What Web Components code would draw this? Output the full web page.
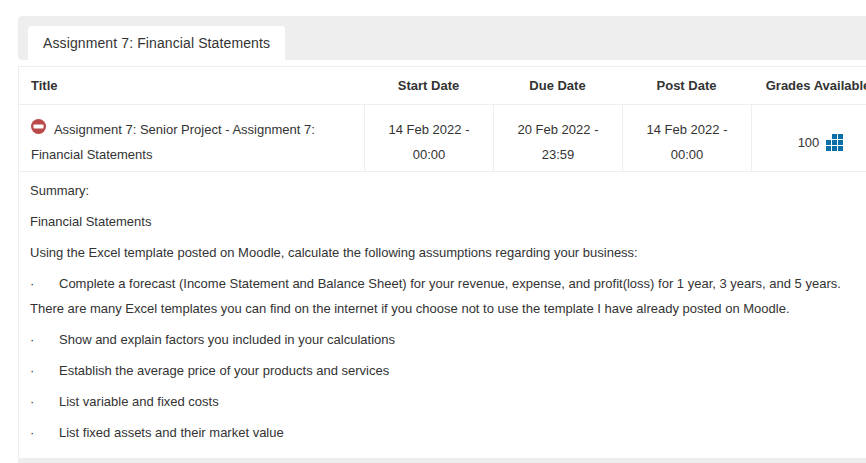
<!DOCTYPE html>
<html>
<head>
<meta charset="utf-8">
<title>Assignment 7</title>
<style>
  html, body { margin: 0; height: 463px; overflow: hidden; background: #fff; }
  body { font: 13px/25px "Liberation Sans", Arial, sans-serif; color: #333; }
  p { margin: 0 0 6px; }
</style>
</head>
<body>
<assignment-page>
  <tab-bar label="Assignment 7: Financial Statements"></tab-bar>
  <assignment-table>
    <assignment-row slot="row"
      name="Assignment 7: Senior Project - Assignment 7: Financial Statements"
      start="14 Feb 2022 - 00:00" due="20 Feb 2022 - 23:59" post="14 Feb 2022 - 00:00" grades="100"></assignment-row>
    <p>Summary:</p>
    <p>Financial Statements</p>
    <p>Using the Excel template posted on Moodle, calculate the following assumptions regarding your business:</p>
    <bullet-line style="margin-bottom: 0">Complete a forecast (Income Statement and Balance Sheet) for your revenue, expense, and profit(loss) for 1 year, 3 years, and 5 years.</bullet-line>
    <p>There are many Excel templates you can find on the internet if you choose not to use the template I have already posted on Moodle.</p>
    <bullet-line>Show and explain factors you included in your calculations</bullet-line>
    <bullet-line>Establish the average price of your products and services</bullet-line>
    <bullet-line>List variable and fixed costs</bullet-line>
    <bullet-line>List fixed assets and their market value</bullet-line>
  </assignment-table>
</assignment-page>

<script>
class AssignmentPage extends HTMLElement {
  constructor() {
    super();
    this.attachShadow({ mode: "open" });
    this.shadowRoot.innerHTML = `
    <style>
      :host { display: block; width: 889px; padding: 16px 0 0 18px; }
    </style>
    <slot></slot>`;
  }
}

class TabBar extends HTMLElement {
  constructor() {
    super();
    this.attachShadow({ mode: "open" });
    this.shadowRoot.innerHTML = `
    <style>
      :host { display: flex; height: 34px; padding: 10px 0 0 10px; background: #eee; border-radius: 4px 0 0 4px; }
      .tab {
        padding: 0 15px;
        background: #fff;
        border-radius: 4px 4px 0 0;
        font-size: 14px;
        letter-spacing: .11px;
        line-height: 34px;
      }
    </style>
    <div class="tab"></div>`;
  }

  connectedCallback() {
    this.shadowRoot.querySelector(".tab").textContent = this.getAttribute("label");
  }
}

class AssignmentTable extends HTMLElement {
  constructor() {
    super();
    this.attachShadow({ mode: "open" });
    this.shadowRoot.innerHTML = `
    <style>
      :host { display: block; margin-top: 6px; border: solid #eee; border-width: 1px 0 5px 1px; height: 391px; }
      .head {
        display: grid;
        grid-template-columns: 345px 129px 129px 129px 134px;
        height: 37px;
        border-bottom: 1px solid #eee;
        font-weight: bold;
        line-height: 37px;
        text-align: center;
      }
      .head div:first-child { text-align: left; padding-left: 12px; }
      .body { padding: 6px 11px 0; }
    </style>
    <div class="head">
      <div>Title</div><div>Start Date</div><div>Due Date</div><div>Post Date</div><div>Grades Available</div>
    </div>
    <slot name="row"></slot>
    <div class="body"><slot></slot></div>`;
  }
}

class AssignmentRow extends HTMLElement {
  constructor() {
    super();
    this.attachShadow({ mode: "open" });
    this.shadowRoot.innerHTML = `
    <style>
      :host {
        display: grid;
        grid-template-columns: 345px 129px 129px 129px 138px;
        height: 66px;
        border-bottom: 1px solid #eee;
      }
      .cell {
        border-left: 1px solid #eee;
        padding: 12px 12px 0;
        text-align: center;
      }
      .title { border-left: 0; text-align: left; }
      .title svg { vertical-align: -1px; margin-right: 5px; position: relative; top: -1px; }
      .grades { display: flex; align-items: center; justify-content: center; gap: 7px; padding: 8px 0 0; }
    </style>
    <div class="cell title">
      <svg width="15" height="15" viewBox="0 0 15 15">
        <circle cx="7.5" cy="7.5" r="7.5" fill="#b94a48"/>
        <rect x="2.5" y="5.5" width="10" height="4" rx=".8" fill="#fff"/>
      </svg>
      <span class="name"></span>
    </div>
    <div class="cell start"></div>
    <div class="cell due"></div>
    <div class="cell post"></div>
    <div class="cell grades">
      <span class="score"></span>
      <svg width="17" height="17" viewBox="0 0 17 17" fill="#0a6ea8">
        <rect x="6" y="0" width="5" height="5"/><rect x="12" y="0" width="5" height="5"/>
        <rect x="0" y="6" width="5" height="5"/><rect x="6" y="6" width="5" height="5"/><rect x="12" y="6" width="5" height="5"/>
        <rect x="0" y="12" width="5" height="5"/><rect x="6" y="12" width="5" height="5"/><rect x="12" y="12" width="5" height="5"/>
      </svg>
    </div>`;
  }

  connectedCallback() {
    const root = this.shadowRoot;
    root.querySelector(".name").textContent = this.getAttribute("name");
    root.querySelector(".start").textContent = this.getAttribute("start");
    root.querySelector(".due").textContent = this.getAttribute("due");
    root.querySelector(".post").textContent = this.getAttribute("post");
    root.querySelector(".score").textContent = this.getAttribute("grades");
  }
}

class BulletLine extends HTMLElement {
  constructor() {
    super();
    this.attachShadow({ mode: "open" });
    this.shadowRoot.innerHTML = `
    <style>
      :host { display: flex; margin-bottom: 6px; }
      .dot { flex: 0 0 29px; }
    </style>
    <span class="dot">·</span>
    <span><slot></slot></span>`;
  }
}

customElements.define("assignment-page", AssignmentPage);
customElements.define("tab-bar", TabBar);
customElements.define("assignment-table", AssignmentTable);
customElements.define("assignment-row", AssignmentRow);
customElements.define("bullet-line", BulletLine);
</script>
</body>
</html>
